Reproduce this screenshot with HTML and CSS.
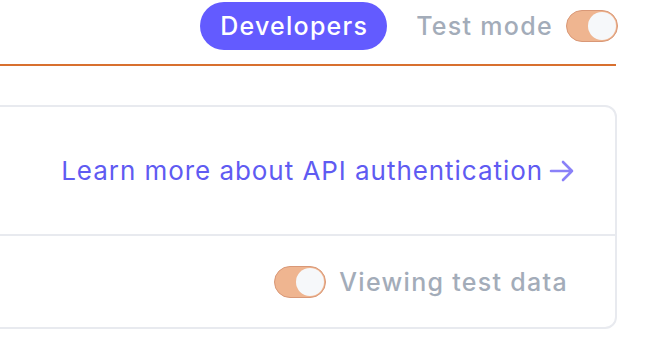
FILE: index.html
```html
<!DOCTYPE html>
<html lang="en">
<head>
<meta charset="utf-8">
<title>Developers</title>
<link rel="stylesheet" href="styles.css">
</head>
<body>
    <div class="topbar">
        <span class="dev_pill">Developers</span>
        <span class="mode_label">Test mode</span>
        <span class="toggle"><span class="knob"></span></span>
    </div>

    <div class="card">
        <div class="card_row link_row">
            <a class="doc_link" href="#">Learn more about API authentication
                <svg class="arrow" width="26" height="22" viewBox="0 0 26 22">
                    <path d="M2 11 H23 M14 2 L23 11 L14 20" fill="none" stroke="#8a81f8" stroke-width="2.6" stroke-linecap="round" stroke-linejoin="round"/>
                </svg>
            </a>
        </div>
        <div class="card_row data_row">
            <span class="toggle"><span class="knob"></span></span>
            <span class="mode_label">Viewing test data</span>
        </div>
    </div>
</body>
</html>
```

FILE: styles.css
```css
body {
    margin: 0;
    background-color: white;
    font-family: Inter, "Noto Sans", sans-serif;
    overflow: hidden;
}

.topbar {
    display: flex;
    align-items: center;
    justify-content: flex-end;
    height: 66px;
    box-sizing: border-box;
    padding: 2px 0 14px 0;
    margin-right: 34px;
    border-bottom: 2px solid #d8702f;
}

.dev_pill {
    display: flex;
    align-items: center;
    height: 48px;
    padding: 0 19px 0 20px;
    border-radius: 24px;
    background-color: #635bff;
    color: white;
    font-size: 25px;
    font-weight: 500;
    letter-spacing: 1.25px;
    margin-right: 29px;
}

.mode_label {
    color: #a3acb9;
    font-size: 25px;
    font-weight: 500;
    letter-spacing: 1.3px;
}

.toggle {
    display: inline-flex;
    align-items: center;
    justify-content: flex-end;
    width: 52px;
    height: 32px;
    box-sizing: border-box;
    padding: 1px;
    border: 1.5px solid #d99877;
    border-radius: 16px;
    background-color: #efb590;
}

.topbar .toggle {
    margin-left: 13px;
    margin-right: -2px;
}

.knob {
    width: 28px;
    height: 28px;
    border-radius: 50%;
    background-color: #f6f8fa;
}

.card {
    margin: 39px 33px 0 -20px;
    border: 2px solid #e8eaef;
    border-radius: 12px;
}

.card_row {
    display: flex;
    align-items: center;
    justify-content: flex-end;
}

.link_row {
    height: 127px;
    padding-right: 40px;
    border-bottom: 2px solid #e8eaef;
}

.doc_link {
    display: flex;
    align-items: center;
    gap: 6px;
    color: #5f5bf2;
    text-decoration: none;
    font-family: Inter, "Noto Sans", sans-serif;
    font-size: 26px;
    letter-spacing: 0.95px;
}

.data_row {
    height: 91px;
    padding-right: 47px;
}

.data_row .toggle {
    margin-right: 13px;
}
```
